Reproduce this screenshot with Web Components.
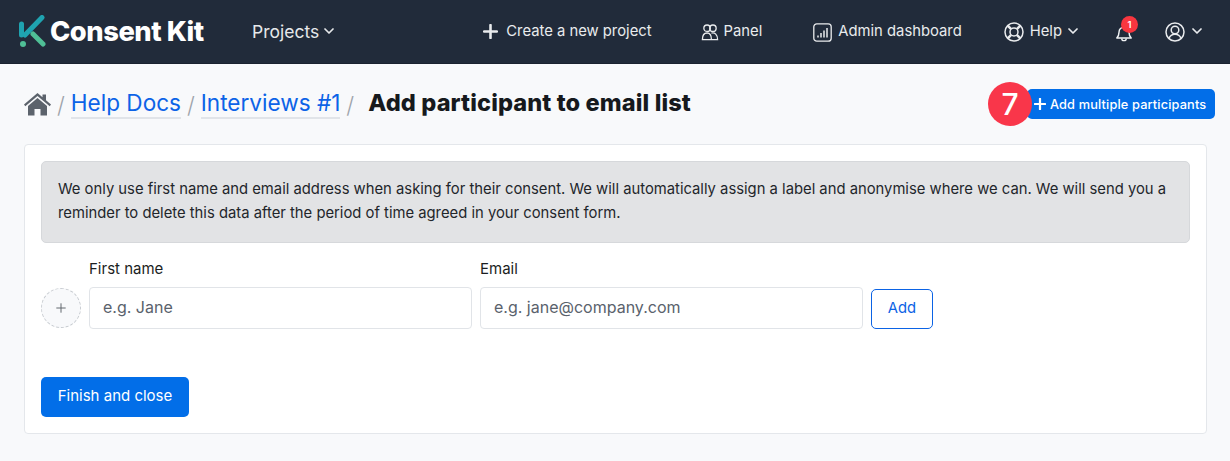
<!DOCTYPE html>
<html>
<head>
<meta charset="utf-8">
<title>Consent Kit</title>
<style>
  html, body { margin:0; padding:0; background:#f8f9fb; font-family:Inter, "Liberation Sans", sans-serif; color:#212529; }
</style>
</head>
<body>
<ck-navbar></ck-navbar>
<ck-page-header></ck-page-header>
<ck-card>
  <ck-alert>We only use first name and email address when asking for their consent. We will automatically assign a label and anonymise where we can. We will send you a reminder to delete this data after the period of time agreed in your consent form.</ck-alert>
  <ck-participant-form></ck-participant-form>
  <ck-button>Finish and close</ck-button>
</ck-card>

<script>
const chevron = `<svg width="10" height="6" viewBox="0 0 10 6" fill="none" stroke="currentColor" stroke-width="1.7" stroke-linecap="round" stroke-linejoin="round"><path d="M1 1l4 4 4-4"/></svg>`;
const plus = (s, w) => `<svg width="${s}" height="${s}" viewBox="0 0 14 14" stroke="currentColor" stroke-width="${w}" stroke-linecap="round"><path d="M7 1v12M1 7h12"/></svg>`;

class CkNavbar extends HTMLElement {
  constructor() {
    super();
    this.attachShadow({ mode: 'open' });
    this.shadowRoot.innerHTML = `
      <style>
        :host { display:flex; align-items:center; height:62px; background:#212b3a; border-bottom:1px solid #1a2230; color:#f1f3f5; font-size:15px; padding:0 28px 1px 18px; box-sizing:content-box; }
        .logo { display:flex; align-items:center; gap:3px; font-size:27.3px; font-weight:800; color:#fff; letter-spacing:-.45px; width:234px; }
        .logo svg { display:block; }
        .projects { display:flex; align-items:center; gap:5px; font-size:17.5px; color:#e6e8ea; }
        .right { margin-left:auto; display:flex; align-items:center; }
        .item { display:flex; align-items:center; gap:6px; color:#e9ebed; font-size:14.8px; }
        .item svg { display:block; }
        .item svg.ico { margin-top:2px; }
        .bell { position:relative; display:block; margin-top:3px; }
        .badge { position:absolute; left:6px; top:-8px; width:17px; height:17px; border-radius:50%; background:#f8363f; color:#fff; font-size:9.5px; font-weight:600; display:flex; align-items:center; justify-content:center; }
      </style>
      <div class="logo">
        <svg width="29" height="32" viewBox="0 0 29 32" fill="none" stroke-linecap="round">
          <path d="M3.500 9v11" stroke="#1fa3b0" stroke-width="5"/>
          <path d="M7 20L24 2.500" stroke="#1fa3b0" stroke-width="5"/>
          <path d="M15 19l10 10" stroke="#4fbf96" stroke-width="5"/>
          <circle cx="5" cy="29" r="3" fill="#4fbf96"/>
        </svg>
        <span>Consent Kit</span>
      </div>
      <div class="projects">Projects ${chevron}</div>
      <div class="right">
        <div class="item" style="margin-right:49px;gap:8px">${plus(15, 2.4)}<span>Create a new project</span></div>
        <div class="item" style="margin-right:51px;gap:5px">
          <svg class="ico" width="18" height="19" viewBox="0 0 19 19" fill="none" stroke="currentColor" stroke-width="1.4"><circle cx="6.4" cy="5" r="3.4"/><circle cx="12.6" cy="5" r="3.4"/><path d="M1.5 17c0-4.5 2-7 5-7s4.500 2.500 4.500 7zM11 10.200c3.500-1 6.500 1.500 6.500 6.800H11"/></svg>
          <span>Panel</span>
        </div>
        <div class="item" style="margin-right:42px">
          <svg class="ico" width="19" height="19" viewBox="0 0 19 19" fill="none" stroke="currentColor"><rect x=".8" y=".8" width="17.400" height="17.400" rx="3" stroke-width="1.300"/><path d="M5 14.500v-2M8 14.500v-4.500M11 14.500v-7M14 14.500v-9.500" stroke-width="1.500"/></svg>
          <span>Admin dashboard</span>
        </div>
        <div class="item" style="margin-right:37px">
          <svg class="ico" width="20" height="20" viewBox="0 0 20 20" fill="none" stroke="currentColor" stroke-width="1.500"><circle cx="10" cy="10" r="9"/><circle cx="10" cy="10" r="4"/><path d="M3.700 3.700l3.500 3.500M16.300 3.700l-3.500 3.500M3.700 16.300l3.500-3.500M16.300 16.300l-3.500-3.500" stroke-width="2.500"/></svg>
          <span>Help</span>${chevron}
        </div>
        <div class="bell" style="margin-right:32px;height:18px">
          <svg width="18" height="18" viewBox="0 0 20 20" fill="none" stroke="currentColor" stroke-width="1.600" stroke-linejoin="round" style="display:block;color:#f1f3f5"><path d="M2 15.500c1.500-1.500 2.500-2.500 2.500-6.500a5.500 5.500 0 0 1 11 0c0 4 1 5 2.500 6.500z"/><path d="M7.500 16a2.500 2.500 0 0 0 5 0"/></svg>
          <span class="badge">1</span>
        </div>
        <div class="item" style="gap:7px">
          <svg class="ico" width="20" height="20" viewBox="0 0 20 20" fill="none" stroke="currentColor" stroke-width="1.500"><circle cx="10" cy="10" r="9"/><circle cx="10" cy="8" r="3.800"/><path d="M4 16.500c1-3 3.200-4.200 6-4.200s5 1.200 6 4.200"/></svg>
          ${chevron}
        </div>
      </div>
    `;
  }
}

class CkPageHeader extends HTMLElement {
  constructor() {
    super();
    this.attachShadow({ mode: 'open' });
    this.shadowRoot.innerHTML = `
      <style>
        :host { display:flex; align-items:center; height:80px; padding:0 15px 0 24px; position:relative; box-sizing:border-box; }
        .crumbs { display:flex; align-items:center; font-size:22.550px; }
        .crumbs svg { display:block; }
        .sep { color:#9ea4ab; margin:0 6px; font-weight:300; }
        a { color:#0c63e7; text-decoration:none; border-bottom:2px solid #e1e4e9; line-height:28px; }
        h1 { margin:-4px 0 0 8px; font-size:23.600px; font-weight:800; color:#16191d; letter-spacing:.1px; }
        .add { margin-left:auto; position:relative; }
        .num { position:absolute; left:-39px; top:-7px; width:44px; height:44px; border-radius:50%; background:#f9364a; color:#fff; display:flex; align-items:center; justify-content:center; font-size:30px; font-weight:500; z-index:1; }
        .btn { display:flex; align-items:center; gap:4px; height:30px; width:188px; box-sizing:border-box; padding-left:7px; background:#026ee8; color:#fff; border-radius:5px; font-size:12.750px; font-weight:500; letter-spacing:.15px; }
      </style>
      <div class="crumbs">
        <svg width="27" height="23" viewBox="0 0 27 23" fill="#5c636c"><path d="M13.500 0L0 11.500l1.300 1.700L13.500 3l12.200 10.200 1.300-1.700-5-4.200V1.500h-3.500v2.800z"/><path d="M13.500 5L4 13v9.500h6.500v-6.500h6v6.500H23V13z"/></svg>
        <span class="sep">/</span><a>Help Docs</a><span class="sep">/</span><a>Interviews #1</a><span class="sep">/</span>
        <h1>Add participant to email list</h1>
      </div>
      <div class="add">
        <div class="num">7</div>
        <div class="btn">${plus(12, 2.6)}<span>Add multiple participants</span></div>
      </div>
    `;
  }
}

class CkCard extends HTMLElement {
  constructor() {
    super();
    this.attachShadow({ mode: 'open' });
    this.shadowRoot.innerHTML = `
      <style>
        :host { display:block; margin:0 23px 0 24px; padding:16px; background:#fff; border:1px solid #e4e7eb; border-radius:4px; height:290px; box-sizing:border-box; }
      </style>
      <slot></slot>
    `;
  }
}

class CkAlert extends HTMLElement {
  constructor() {
    super();
    this.attachShadow({ mode: 'open' });
    this.shadowRoot.innerHTML = `
      <style>
        :host { display:block; background:#e2e3e5; border:1px solid #d6d8db; border-radius:5px; padding:15px 16px 16px; height:82px; box-sizing:border-box; font-size:14.800px; line-height:24px; color:#22262b; }
      </style>
      <slot></slot>
    `;
  }
}

class CkParticipantForm extends HTMLElement {
  constructor() {
    super();
    this.attachShadow({ mode: 'open' });
    this.shadowRoot.innerHTML = `
      <style>
        :host { display:flex; align-items:flex-end; gap:8px; margin-top:16px; height:70px; margin-bottom:48px; }
        .avatar { width:40px; height:40px; box-sizing:border-box; border-radius:50%; border:1px dashed #c9cdd2; background:#f8f9fb; color:#62686f; display:flex; align-items:center; justify-content:center; margin-bottom:1px; }
        .field { width:383px; }
        label { display:block; font-size:15px; line-height:20px; margin-bottom:8px; color:#1b1e22; }
        .input { height:42px; box-sizing:border-box; border:1px solid #e1e4e8; border-radius:4px; background:#fff; padding:0 13px 2px; display:flex; align-items:center; font-size:16px; color:#5a626c; }
        .add { height:40px; width:62px; box-sizing:border-box; border:1px solid #0b63e5; border-radius:5px; color:#0b63e5; display:flex; align-items:center; justify-content:center; font-size:14.800px; font-weight:400; padding-bottom:2px; }
      </style>
      <div class="avatar">${plus(10, 1.4)}</div>
      <div class="field"><label>First name</label><div class="input">e.g. Jane</div></div>
      <div class="field"><label>Email</label><div class="input">e.g. jane@company.com</div></div>
      <div class="add">Add</div>
    `;
  }
}

class CkButton extends HTMLElement {
  constructor() {
    super();
    this.attachShadow({ mode: 'open' });
    this.shadowRoot.innerHTML = `
      <style>
        :host { display:inline-flex; align-items:center; justify-content:center; width:148px; height:40px; box-sizing:border-box; padding-bottom:3px; background:#026ee8; color:#fff; border-radius:5px; font-size:15px; font-weight:400; }
      </style>
      <slot></slot>
    `;
  }
}

customElements.define('ck-navbar', CkNavbar);
customElements.define('ck-page-header', CkPageHeader);
customElements.define('ck-card', CkCard);
customElements.define('ck-alert', CkAlert);
customElements.define('ck-participant-form', CkParticipantForm);
customElements.define('ck-button', CkButton);
</script>
</body>
</html>
